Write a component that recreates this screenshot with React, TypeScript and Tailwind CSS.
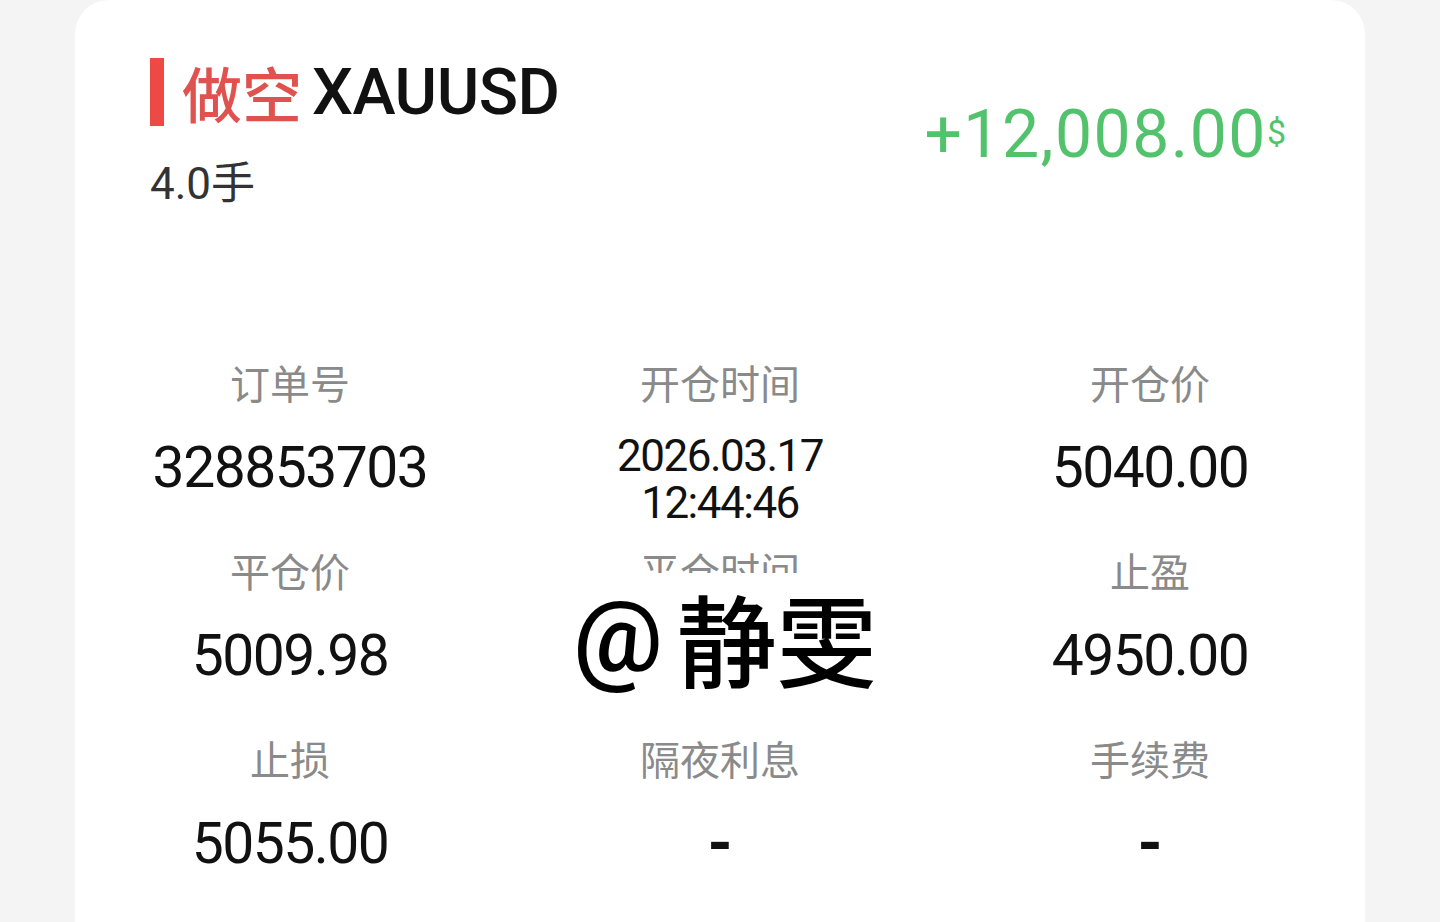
import React from 'react';

interface Cell {
  label: string;
  value: string;
  lines?: string[];
}

const rows: Cell[][] = [
  [
    { label: '订单号', value: '328853703' },
    { label: '开仓时间', value: '', lines: ['2026.03.17', '12:44:46'] },
    { label: '开仓价', value: '5040.00' },
  ],
  [
    { label: '平仓价', value: '5009.98' },
    { label: '平仓时间', value: '' },
    { label: '止盈', value: '4950.00' },
  ],
  [
    { label: '止损', value: '5055.00' },
    { label: '隔夜利息', value: '-' },
    { label: '手续费', value: '-' },
  ],
];

const InfoCell: React.FC<{ cell: Cell }> = ({ cell }) => (
  <div className="flex flex-col items-center">
    <div className="text-[40px] leading-[48px] text-[#8a8a8a] font-['Noto_Sans_CJK_SC',sans-serif]">
      {cell.label}
    </div>
    {cell.lines ? (
      <div className="mt-[27px] flex flex-col items-center text-[44px] leading-[47px] tracking-[-1.5px] text-[#111]">
        {cell.lines.map((l) => (
          <span key={l}>{l}</span>
        ))}
      </div>
    ) : cell.value === '-' ? (
      <div className="mt-[30px] text-[64px] font-bold leading-none text-[#111]">-</div>
    ) : (
      <div className="mt-[33px] text-[57px] leading-none tracking-[-1.5px] text-[#111]">{cell.value}</div>
    )}
  </div>
);

export default function App() {
  return (
    <div className="h-screen w-full overflow-hidden bg-[#f4f4f4] font-['Roboto','Noto_Sans_CJK_SC',sans-serif]">
      <div className="relative ml-[75px] h-[960px] w-[1290px] rounded-t-[34px] bg-white">
        <div className="flex items-start justify-between pl-[75px] pr-[79px] pt-[58px]">
          <div className="flex flex-col">
            <div className="flex h-[68px] items-center">
              <div className="h-[68px] w-[14px] bg-[#ee4a45]" />
              <span className="ml-[18px] text-[60px] font-medium leading-none text-[#e0524d] font-['Noto_Sans_CJK_SC',sans-serif]">
                做空
              </span>
              <span className="ml-[10px] text-[65px] font-medium leading-none tracking-[-0.5px] text-[#111]">
                XAUUSD
              </span>
            </div>
            <div className="mt-[36px] text-[44px] leading-[44px] text-[#333]">4.0手</div>
          </div>
          <div className="mt-[44px] flex items-start text-[#52c36c]">
            <span className="text-[66px] leading-none tracking-[1.5px]">+12,008.00</span>
            <span className="mt-[13px] text-[34px] leading-none">$</span>
          </div>
        </div>

        <div className="mt-[152px] flex flex-col">
          {rows.map((row, i) => (
            <div key={i} className="grid h-[188px] grid-cols-3">
              {row.map((cell) => (
                <InfoCell key={cell.label} cell={cell} />
              ))}
            </div>
          ))}
        </div>

        <div className="absolute left-[484px] top-[573px] flex h-[140px] w-[342px] items-center justify-center bg-white pb-[12px] pr-[10px] text-black">
          <span className="text-[100px] font-medium leading-none">@</span>
          <span className="ml-[14px] text-[100px] font-medium leading-none font-['Noto_Sans_CJK_SC',sans-serif]">
            静雯
          </span>
        </div>
      </div>
    </div>
  );
}
